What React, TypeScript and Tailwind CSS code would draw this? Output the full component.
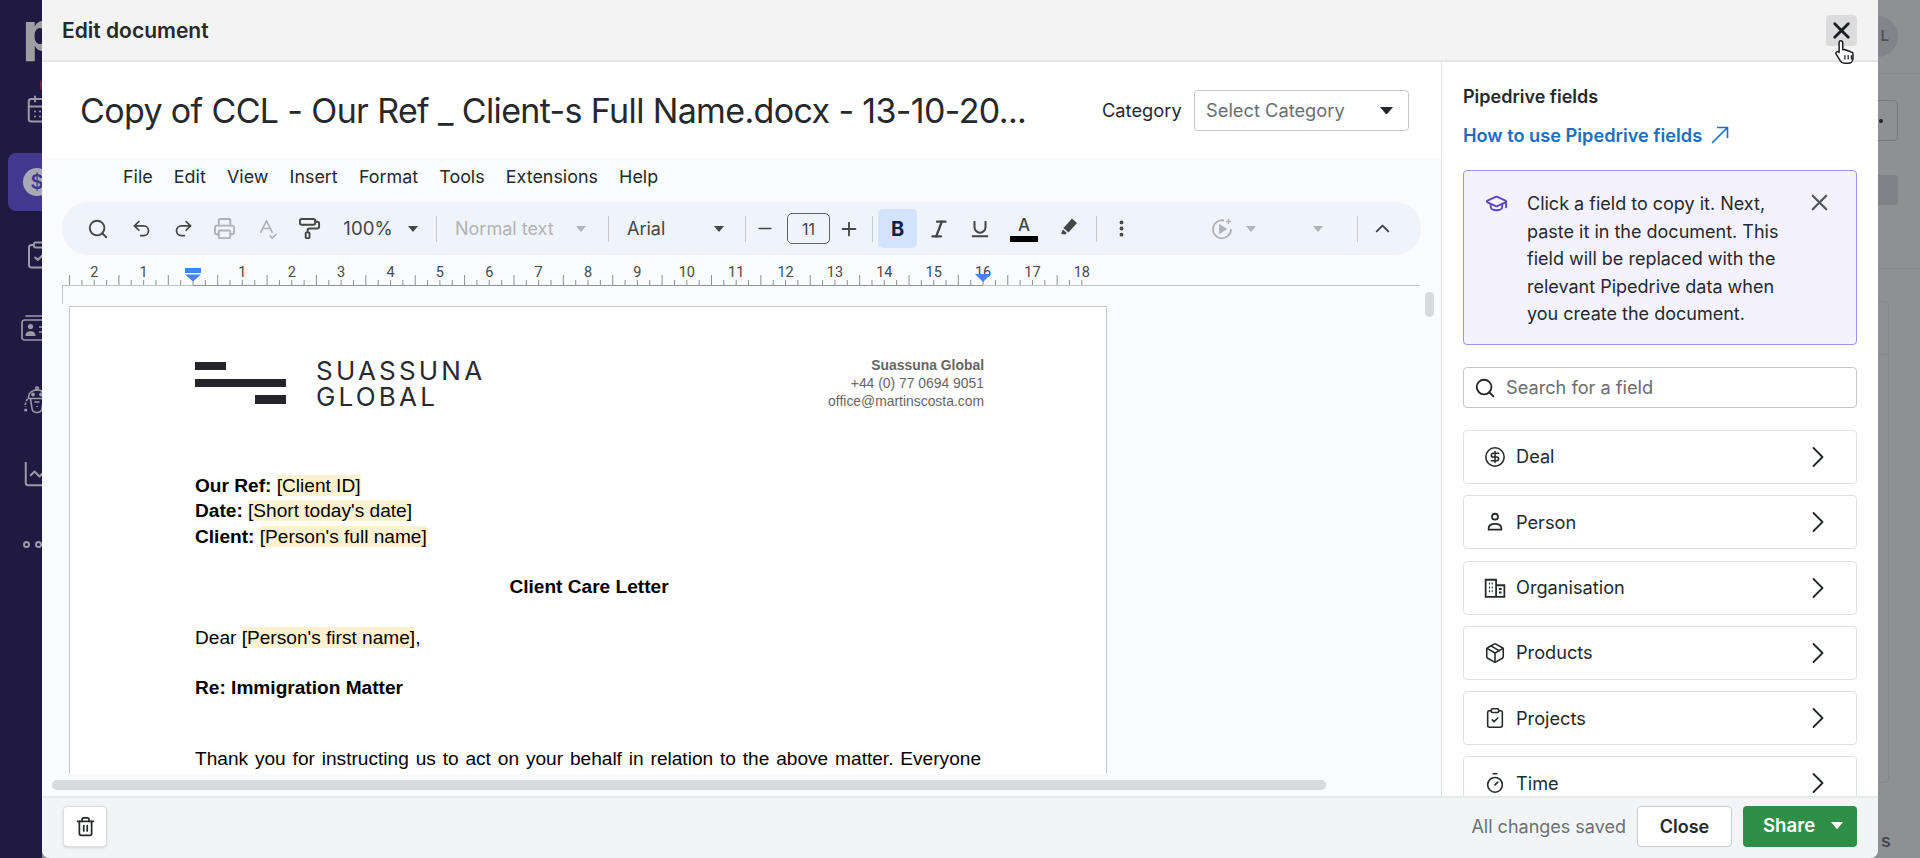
import React from "react";
import {
  CalendarDays, ChartLine, ChevronRight, ChevronUp, CircleDollarSign, ClipboardCheck,
  EllipsisVertical, GraduationCap, Italic, Minus, Package, PaintRoller, Plus, Printer, Redo2, Search, SpellCheck,
  Timer, Trash2, Undo2, X, Underline,
} from "lucide-react";

const Caret = ({ color = "#444746", size = 10 }: { color?: string; size?: number }) => (
  <svg width={size} height={size * 0.6} viewBox="0 0 10 6"><path d="M0 0h10L5 6z" fill={color} /></svg>
);

const Sep = () => <div className="h-[26px] w-px bg-[#c7c9cc]" />;

const Ruler = () => {
  const zero = 193 - 42;
  const unit = 49.38;
  const ticks: React.ReactNode[] = [];
  for (let q = -12; q <= 72; q++) {
    const x = zero + (q * unit) / 4;
    const mod = ((q % 4) + 4) % 4;
    if (x > 1107 - 42 + 0.5 || x < 20) continue;
    const h = mod === 2 ? 10 : 5;
    ticks.push(<line key={q} x1={x} x2={x} y1={30 - h} y2={30} stroke="#8f9194" strokeWidth="1" />);
  }
  const labels: React.ReactNode[] = [];
  for (let n = -2; n <= 18; n++) {
    if (n === 0) continue;
    labels.push(
      <text key={n} x={zero + n * unit} y={22} fontSize="14.5" textAnchor="middle" fill="#484a4d" fontFamily="Roboto, sans-serif">
        {Math.abs(n)}
      </text>
    );
  }
  return (
    <svg width="1399" height="31" className="block">
      {ticks}
      {labels}
      <line x1="20" x2="1378" y1="30.5" y2="30.5" stroke="#c3c5c8" />
      <line x1={zero} x2="941" y1="30.5" y2="30.5" stroke="#8f9194" />
      <rect x="143" y="13" width="16" height="5" fill="#4285f4" />
      <path d="M143 19.5h16l-8 7z" fill="#4285f4" />
      <path d="M933 19h16l-8 8z" fill="#4285f4" />
    </svg>
  );
};

const Hl = ({ children }: { children: React.ReactNode }) => <span className="bg-[#fdf2d0]">{children}</span>;

const PersonIcon = () => (
  <svg width="22" height="22" viewBox="0 0 20 20" fill="none" stroke="#26292c" strokeWidth="1.6">
    <circle cx="10" cy="5.2" r="2.7" />
    <path d="M4.2 17v-1.4c0-2.6 2.5-4 5.8-4s5.8 1.4 5.8 4V17z" strokeLinejoin="round" />
  </svg>
);

const OrgIcon = () => (
  <svg width="22" height="22" viewBox="0 0 20 20" fill="none" stroke="#26292c" strokeWidth="1.6">
    <path d="M1.5 18V2.5h9.5V18zM11 7.5h7.5V18H11" />
    <path d="M4.5 6h1M7 6h1M4.5 9.5h1M7 9.5h1M4.5 13h1M7 13h1M13.5 11h2.5M13.5 14h2.5" strokeWidth="1.8" />
  </svg>
);

const CardIcon = () => (
  <svg width="32" height="26" viewBox="0 0 32 26" fill="none" stroke="#9b9ba6" strokeWidth="1.7">
    <path d="M5 1h22" strokeLinecap="round" />
    <rect x="1" y="5" width="30" height="20" rx="2.5" />
    <circle cx="9.5" cy="11.5" r="2.6" fill="#9b9ba6" stroke="none" />
    <path d="M4.5 21c0-3.4 2-4.8 5-4.8s5 1.4 5 4.8z" fill="#9b9ba6" stroke="none" />
    <path d="M18 12h10M18 17h10" />
  </svg>
);

const RobotIcon = () => (
  <svg width="30" height="30" viewBox="0 0 30 30" fill="none" stroke="#9b9ba6" strokeWidth="1.6">
    <circle cx="15" cy="2.5" r="1.4" />
    <path d="M6.5 11c0-4 3.5-7 8.5-7s8.5 3 8.5 7v1.5h-17z" />
    <circle cx="11" cy="8.5" r="1.1" fill="#9b9ba6" />
    <circle cx="19" cy="8.5" r="1.1" fill="#9b9ba6" />
    <path d="M8.5 12.5l1.5 10c.3 2 2 4 5 4s4.7-2 5-4l1.5-10" />
    <path d="M12.5 16h5M15 20v1" />
    <path d="M5.5 13c-1.5 2-2.5 4.5-2 8" strokeDasharray="2.5 1.5" />
    <circle cx="3.7" cy="24" r=".8" fill="#9b9ba6" />
  </svg>
);

const rows: { label: string; icon: React.ReactNode }[] = [
  { label: "Deal", icon: <CircleDollarSign size={22} strokeWidth={1.7} /> },
  { label: "Person", icon: <PersonIcon /> },
  { label: "Organisation", icon: <OrgIcon /> },
  { label: "Products", icon: <Package size={22} strokeWidth={1.7} /> },
  { label: "Projects", icon: <ClipboardCheck size={22} strokeWidth={1.7} /> },
  { label: "Time", icon: <Timer size={22} strokeWidth={1.7} /> },
];

function Sidebar() {
  return (
    <aside className="relative w-[42px] shrink-0 overflow-hidden bg-[#201a43] text-[#9b9ba6]">
      <div className="h-[72px] pl-[23px] pt-[4px] font-['Inter',sans-serif] text-[52px] font-extrabold leading-[56px] text-[#9d9da2]">p</div>
      <div className="flex w-[70px] flex-col">
        <div className="flex h-[73px] items-center pl-[25px]"><CalendarDays size={30} strokeWidth={1.6} /></div>
        <div className="flex h-[73px] items-center pl-[8px]">
          <div className="flex h-[58px] w-[60px] items-center rounded-lg bg-[#43388f] pl-[15px]">
            <div className="flex h-[28px] w-[28px] items-center justify-center rounded-full bg-[#a9a9b4] font-['Inter',sans-serif] text-[20px] font-semibold text-[#43388f]">$</div>
          </div>
        </div>
        <div className="flex h-[73px] items-center pl-[24px]"><ClipboardCheck size={30} strokeWidth={1.6} /></div>
        <div className="flex h-[73px] items-center pl-[21px]"><CardIcon /></div>
        <div className="flex h-[73px] items-center pl-[22px]"><RobotIcon /></div>
        <div className="flex h-[73px] items-center pl-[22px]"><ChartLine size={30} strokeWidth={1.6} /></div>
        <div className="flex h-[68px] items-center gap-[5px] pl-[23px]">
          <div className="h-[7px] w-[7px] rounded-full border-2 border-[#9b9ba6]" />
          <div className="h-[7px] w-[7px] rounded-full border-2 border-[#9b9ba6]" />
        </div>
      </div>
      <div className="absolute left-[40px] top-[80px] h-[10px] w-[4px] rounded-full bg-[#7a1f3a]" />
    </aside>
  );
}

function RightStrip() {
  return (
    <aside className="flex w-[42px] shrink-0 flex-col overflow-hidden bg-[#8f9094]">
      <div className="h-[74px] border-b border-[#86878b] pt-[16px]">
        <div className="ml-[-21px] flex h-[41px] w-[41px] items-center justify-end rounded-full bg-[#838489] pr-[9px] font-['Inter',sans-serif] text-[15px] font-semibold text-[#4f5055]">L</div>
      </div>
      <div className="ml-[-20px] mt-[26px] flex h-[41px] w-[40px] items-center justify-end rounded border border-[#77787c] pr-[14px] text-[#222]">
        <div className="h-[4px] w-[4px] rounded-full bg-[#222]" />
      </div>
      <div className="ml-[-20px] mt-[34px] h-[30px] w-[40px] rounded bg-[#818287]" />
      <div className="mt-[63px] h-px bg-[#85868a]" />
      <div className="ml-[-10px] mt-[32px] flex h-[482px] w-[21px] flex-col rounded border border-[#86878b]">
        <div className="mt-[52px] h-px bg-[#86878b]" />
      </div>
      <div className="pl-[3px] pt-[47px] font-['Inter',sans-serif] text-[18px] font-medium leading-[22px] text-[#3f4044]">s</div>
    </aside>
  );
}

function Toolbar() {
  const c = "flex shrink-0 items-center justify-center";
  return (
    <div className="mx-[20px] flex h-[53px] items-center rounded-[26px] bg-[#eff3fa] pl-[15px] font-['Inter',sans-serif] text-[18px] text-[#444746]">
      <div className={`${c} w-[42px]`}><Search size={22} strokeWidth={2} /></div>
      <div className={`${c} w-[44px]`}><Undo2 size={21} strokeWidth={2} /></div>
      <div className={`${c} w-[40px]`}><Redo2 size={21} strokeWidth={2} /></div>
      <div className={`${c} w-[42px] text-[#b0b2b6]`}><Printer size={23} strokeWidth={2} /></div>
      <div className={`${c} w-[42px] text-[#b0b2b6]`}><SpellCheck size={23} strokeWidth={1.7} /></div>
      <div className={`${c} w-[44px]`}><PaintRoller size={23} strokeWidth={2} /></div>
      <div className={`${c} w-[74px] text-[18.6px]`}>100%</div>
      <div className={`${c} w-[16px]`}><Caret /></div>
      <div className={`${c} w-[30px]`}><Sep /></div>
      <div className="w-[122px] shrink-0 pl-[4px] text-[#b1b3b7]">Normal text</div>
      <div className={`${c} w-[16px]`}><Caret color="#b1b3b7" /></div>
      <div className={`${c} w-[38px]`}><Sep /></div>
      <div className="w-[84px] shrink-0">Arial</div>
      <div className={`${c} w-[16px]`}><Caret /></div>
      <div className={`${c} ml-[8px] w-[20px]`}><Sep /></div>
      <div className={`${c} w-[20px]`}><Minus size={21} strokeWidth={2} /></div>
      <div className={`${c} ml-[12px] h-[31px] w-[43px] rounded-[5px] border border-[#5f6368] text-[16px]`}>11</div>
      <div className={`${c} w-[38px]`}><Plus size={22} strokeWidth={2} /></div>
      <div className={`${c} w-[8px]`}><Sep /></div>
      <div className={`${c} ml-[2px] h-[39px] w-[39px] rounded-[5px] bg-[#d3e3fd] text-[20px] font-bold text-[#0b1f4d]`}>B</div>
      <div className={`${c} w-[44px]`}><Italic size={22} strokeWidth={2.6} /></div>
      <div className={`${c} w-[38px]`}><Underline size={22} strokeWidth={2.2} /></div>
      <div className={`${c} w-[50px] flex-col`}>
        <span className="text-[17px] font-medium leading-[18px]">A</span>
        <div className="mt-[2px] h-[6px] w-[28px] bg-black" />
      </div>
      <div className={`${c} w-[40px]`}>
        <svg width="20" height="20" viewBox="0 0 20 20" fill="#444746" className="mb-[4px]"><path d="M13 1.5l5 4.5-8.5 9.5-5-4.5zM4 12.5l3.8 3.4-1.6 1.5-4.2-.4z" /></svg>
      </div>
      <div className={`${c} w-[14px]`}><Sep /></div>
      <div className={`${c} w-[36px]`}><EllipsisVertical size={21} strokeWidth={2.5} /></div>
      <div className={`${c} ml-[71px] w-[24px] text-[#b0b2b6]`}>
        <svg width="24" height="24" viewBox="0 0 24 24" fill="none" stroke="#b0b2b6" strokeWidth="1.8"><path d="M14 3.5A9 9 0 1 0 21 12" /><path d="M10 8.5v7l5.5-3.5z" fill="#b0b2b6" /><path d="M18.5 2v5M16 4.5h5" strokeWidth="1.3" /></svg>
      </div>
      <div className={`${c} w-[34px]`}><Caret color="#b1b3b7" /></div>
      <div className={`${c} ml-[42px] w-[16px]`}><Caret color="#b1b3b7" /></div>
      <div className={`${c} ml-[24px] w-[14px]`}><Sep /></div>
      <div className={`${c} w-[36px]`}><ChevronUp size={23} strokeWidth={2} /></div>
    </div>
  );
}

function Page() {
  return (
    <div className="ml-[27px] mt-[20px] h-[468px] w-[1038px] overflow-hidden border-x border-t border-[#c6c8cb] bg-white pl-[125px] pr-[122px] pt-[53px] font-['Liberation_Sans',Arial,sans-serif] text-[19.1px] leading-[25.4px] text-black">
      <div className="flex h-[46px] justify-between">
        <div className="flex">
          <svg width="91" height="43" viewBox="0 0 91 43" className="mt-[2px]" fill="#26262a">
            <rect x="0" y="0" width="31" height="8" />
            <rect x="0" y="17" width="91" height="8" />
            <rect x="60" y="33" width="31" height="9" />
          </svg>
          <div className="ml-[30px] mt-[-3px] font-['Inter',sans-serif] text-[26px] font-normal leading-[27px] tracking-[3.2px] text-[#2a2a2e]">
            <div>SUASSUNA</div>
            <div className="mt-[-1px]">GLOBAL</div>
          </div>
        </div>
        <div className="mt-[-4px] text-right text-[13.9px] leading-[18.2px] text-[#666666]">
          <div className="font-bold">Suassuna Global</div>
          <div>+44 (0) 77 0694 9051</div>
          <div>office@martinscosta.com</div>
        </div>
      </div>
      <div className="mt-[67px] w-[786px]">
        <div><b>Our Ref:</b> <Hl>[Client ID]</Hl></div>
        <div><b>Date:</b> <Hl>[Short today's date]</Hl></div>
        <div><b>Client:</b> <Hl>[Person's full name]</Hl></div>
        <div className="mt-[24.6px] pl-[2px] text-center font-bold">Client Care Letter</div>
        <div className="mt-[25.4px]">Dear <Hl>[Person's first name]</Hl>,</div>
        <div className="mt-[25px] font-bold">Re: Immigration Matter</div>
        <div className="mt-[46px] text-justify [text-align-last:justify]">Thank you for instructing us to act on your behalf in relation to the above matter. Everyone</div>
      </div>
    </div>
  );
}

function FieldsPanel() {
  return (
    <div className="h-full w-[437px] shrink-0 overflow-hidden border-l border-[#e3e4e6] bg-white px-[21px] pt-[24px] font-['Inter',sans-serif] text-[#26292c]">
      <div className="text-[18px] font-semibold leading-[22px]">Pipedrive fields</div>
      <div className="mt-[15px] flex items-center gap-[9px] text-[18.2px] font-semibold leading-[24px] text-[#1a6fc0]">
        How to use Pipedrive fields
        <svg width="18" height="18" viewBox="0 0 18 18" fill="none" stroke="currentColor" strokeWidth="1.6"><path d="M1 17L16.5 1.5M6 1.5h10.5V12" /></svg>
      </div>
      <div className="mt-[23px] flex h-[175px] rounded border border-[#a195e2] bg-[#f4f2ff] pl-[21px] pt-[19px]">
        <GraduationCap size={23} strokeWidth={2} className="mt-[2px] shrink-0 text-[#5a45c9]" />
        <div className="ml-[19px] w-[270px] shrink-0 text-[18px] leading-[27.5px]">Click a field to copy it. Next, paste it in the document. This field will be replaced with the relevant Pipedrive data when you create the document.</div>
        <X size={27} strokeWidth={2.1} className="ml-[9px] mt-[-1px] shrink-0 text-[#55585c]" />
      </div>
      <div className="mt-[22px] flex h-[41px] items-center rounded border border-[#c5c7ca] pl-[10px] text-[18px] text-[#6a6d72]">
        <Search size={22} strokeWidth={2} className="text-[#26292c]" />
        <span className="ml-[10px] text-[18.2px]">Search for a field</span>
      </div>
      <div className="mt-[22px] flex flex-col gap-[11.3px]">
        {rows.map((r) => (
          <div key={r.label} className="flex h-[54px] shrink-0 items-center rounded border border-[#e0e1e3] pl-[20px] pr-[20px] text-[18.2px]">
            <span className="flex w-[22px] justify-center">{r.icon}</span>
            <span className="ml-[10px] flex-1">{r.label}</span>
            <ChevronRight size={36} strokeWidth={1.25} />
          </div>
        ))}
      </div>
    </div>
  );
}

export default function App() {
  return (
    <div className="flex h-[858px] w-[1920px] overflow-hidden bg-[#8f9094]">
      <Sidebar />
      <main className="relative flex h-[858px] w-[1836px] shrink-0 flex-col overflow-hidden rounded-b-lg bg-white font-['Inter',sans-serif] text-[#26292c]">
        <header className="flex h-[62px] shrink-0 items-center justify-between border-b-2 border-[#e4e5e6] bg-[#f3f3f3] pl-[20px] pr-[21px]">
          <span className="pt-[1px] text-[21px] font-semibold">Edit document</span>
          <button className="flex h-[31px] w-[31px] items-center justify-center rounded bg-[#dcdcdd] text-[#1b1d20]"><X size={27} strokeWidth={2.5} /></button>
        </header>
        <div className="flex min-h-0 flex-1">
          <div className="flex w-[1399px] shrink-0 flex-col">
            <div className="flex h-[96px] shrink-0 items-center pl-[38px] pt-[1px]">
              <span className="w-[1022px] text-[34px] leading-[40px] tracking-[-0.64px] text-[#26292c]">Copy of CCL - Our Ref _ Client-s Full Name.docx - 13-10-20...</span>
              <span className="w-[92px] text-[18.3px]">Category</span>
              <div className="flex h-[41px] w-[215px] items-center justify-between rounded border border-[#c5c7ca] pl-[11px] pr-[15px] text-[18.3px] text-[#6a6d72]">
                Select Category <Caret color="#26292c" size={13} />
              </div>
            </div>
            <div className="relative min-h-0 flex-1 overflow-hidden bg-[#f9fbfd]">
              <div className="flex h-[44px] items-center gap-[21.2px] pb-[6px] pl-[81px] text-[17.9px] text-[#26292c]">
                <span>File</span><span>Edit</span><span>View</span><span>Insert</span><span>Format</span><span>Tools</span><span>Extensions</span><span>Help</span>
              </div>
              <Toolbar />
              <Ruler />
              <div className="absolute top-[128px] ml-[20px] h-[18px] w-px bg-[#c6c8cb]" />
              <Page />
              <div className="absolute bottom-[6px] left-[10px] h-[10px] w-[1274px] rounded-full bg-[#d9dadd]" />
              <div className="absolute right-[7px] top-[134px] h-[25px] w-[9px] rounded-full bg-[#d9dadd]" />
            </div>
          </div>
          <FieldsPanel />
        </div>
        <footer className="flex h-[62px] shrink-0 items-center justify-between border-t-2 border-[#e8e9ea] bg-[#f3f4f5] pb-[4px] pl-[21px] pr-[21px]">
          <button className="flex h-[41px] w-[44px] items-center justify-center rounded border border-[#dcdde0] bg-white shadow-sm"><Trash2 size={21} strokeWidth={2} /></button>
          <div className="flex items-center">
            <span className="text-[18px] text-[#6d7075]">All changes saved</span>
            <button className="ml-[11px] h-[41px] w-[95px] rounded border border-[#c9cbce] bg-white text-[18px] font-semibold">Close</button>
            <button className="ml-[11px] flex h-[41px] w-[114px] items-center justify-between rounded bg-[#2f8f46] pl-[20px] pr-[14px] text-[18.6px] font-semibold text-white">Share <Caret color="#ffffff" size={12} /></button>
          </div>
        </footer>
        <svg width="26" height="28" viewBox="0 0 24 26" className="absolute right-[19px] top-[38px]">
          <path d="M7 2.5c1.3 0 2 .8 2 2V11l1.2-.2c.8-.1 1.5.1 1.8.7.8-.3 1.7 0 2 .7.9-.3 1.9.1 2.2.9.9-.2 2.3.2 2.3 2v3.4c0 2.6-1.6 5-4.4 5h-3.5c-2 0-3-.9-4-2.4L3 15.2c-.7-1-.4-2 .3-2.4.8-.5 1.7-.1 2.3.6V4.5c0-1.2.3-2 1.4-2z" fill="#fff" stroke="#1b1d20" strokeWidth="1.4" strokeLinejoin="round" />
          <path d="M11 16v4M14 16v4M17 16v4" stroke="#1b1d20" strokeWidth="1.2" />
        </svg>
      </main>
      <RightStrip />
    </div>
  );
}
